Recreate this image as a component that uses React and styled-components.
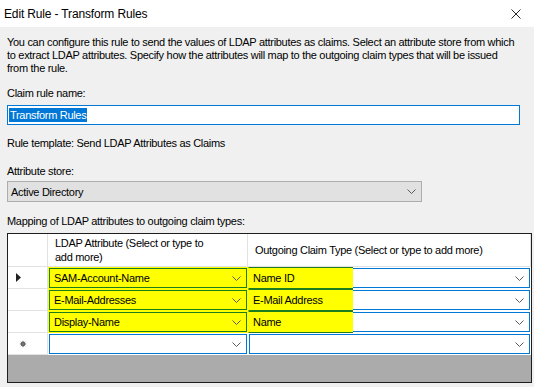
import React from 'react'
import styled, { createGlobalStyle } from 'styled-components'

const GlobalStyle = createGlobalStyle`
  html, body {
    margin: 0;
    padding: 0;
    background: #f0f0f0;
  }
  body {
    font-family: "Liberation Sans", Arial, sans-serif;
    font-size: 11px;
    letter-spacing: -0.3px;
    color: #000;
  }
`

const Window = styled.div`
  width: 534px;
  height: 387px;
  display: flex;
  flex-direction: column;
  background: #f0f0f0;
  overflow: hidden;
`

const TitleBar = styled.div`
  height: 27px;
  flex: none;
  background: #fff;
  display: flex;
  align-items: center;
  justify-content: space-between;
  padding: 0 13px 0 4px;
  font-size: 12px;
  letter-spacing: -0.15px;
`

const Body = styled.div`
  flex: 1;
  display: flex;
  flex-direction: column;
  padding: 9px 3px 0 7px;
`

const Description = styled.p`
  margin: 0;
  line-height: 13px;
  white-space: nowrap;
`

const Label = styled.div`
  line-height: 13px;
  margin-top: ${p => p.$top || 0}px;
`

const TextBox = styled.div`
  margin-top: 5px;
  width: 513px;
  height: 20px;
  box-sizing: border-box;
  border: 1px solid #0078d7;
  background: #fff;
  display: flex;
  align-items: center;
  padding-left: 1px;
`

const Selected = styled.span`
  background: #0078d7;
  color: #fff;
  line-height: 14px;
  padding: 0 1px;
`

const Select = styled.div`
  margin-top: 3px;
  width: 415px;
  height: 21px;
  box-sizing: border-box;
  border: 1px solid #adadad;
  background: #e1e1e1;
  display: flex;
  align-items: center;
  justify-content: space-between;
  padding: 0 5px 0 3px;
`

const Grid = styled.div`
  margin-top: 5px;
  width: 525px;
  height: 150px;
  box-sizing: border-box;
  border: 1px solid #1e1e1e;
  background: #ababab;
  display: grid;
  grid-template-columns: 40px 200px 1fr;
  grid-template-rows: 33px repeat(4, 22px) 1fr;
`

const HeaderCell = styled.div`
  background: #fff;
  border-right: 1px solid #e2e2e2;
  border-bottom: 1px solid #e2e2e2;
  display: flex;
  align-items: center;
  padding-left: ${p => p.$pad || 0}px;
  line-height: 14px;
`

const RowHead = styled.div`
  background: #fff;
  border-right: 1px solid #e2e2e2;
  border-bottom: 1px solid #e2e2e2;
  display: flex;
  align-items: center;
  padding-left: 8px;
`

const Cell = styled.div`
  display: flex;
  padding: 1px;
  background: ${p => (p.$mark ? '#ffff00' : '#fff')};
`

const Combo = styled.div`
  flex: 1;
  display: flex;
  align-items: stretch;
  border: 1px solid ${p => (p.$mark ? '#1d7d1d' : '#0078d7')};
  background: ${p => (p.$mark ? '#ffff00' : '#fff')};
`

const Value = styled.span`
  flex: ${p => (p.$mark ? 'none' : 1)};
  width: ${p => (p.$mark ? '100px' : 'auto')};
  display: flex;
  align-items: center;
  padding-left: 4px;
  background: ${p => (p.$mark ? '#ffff00' : 'transparent')};
  ${p => p.$mark && `
    margin: -2px 0 -2px -2px;
    border-bottom: 1px solid #1d7d1d;
    border-top: 1px solid #1d7d1d;
    border-left: 1px solid #ffff00;
  `}
`

const Arrow = styled.span`
  margin-left: auto;
  width: 16px;
  display: flex;
  align-items: center;
  justify-content: center;
  padding-right: 2px;
`

const Filler = styled.div`
  grid-column: 1 / -1;
`

const Chevron = () => (
  <svg width="9" height="5" viewBox="0 0 9 5">
    <polyline points="0.5,0.5 4.5,4.5 8.5,0.5" fill="none" stroke="#5a5a5a" strokeWidth="1" />
  </svg>
)

const Close = () => (
  <svg width="10" height="10" viewBox="0 0 10 10">
    <path d="M0.5 0.5 L9.5 9.5 M9.5 0.5 L0.5 9.5" stroke="#111" strokeWidth="0.9" />
  </svg>
)

const Pointer = () => (
  <svg width="6" height="9" viewBox="0 0 6 9">
    <polygon points="0,0 5,4.5 0,9" fill="#222" />
  </svg>
)

const NewRow = () => (
  <svg width="8" height="8" viewBox="0 0 8 8" style={{ marginLeft: 3 }}>
    <circle cx="4" cy="4" r="2.4" fill="#555" />
    <path d="M4 0.8 V7.2 M0.8 4 H7.2 M1.8 1.8 L6.2 6.2 M6.2 1.8 L1.8 6.2" stroke="#777" strokeWidth="0.8" />
  </svg>
)

const rows = [
  { attr: 'SAM-Account-Name', claim: 'Name ID', current: true },
  { attr: 'E-Mail-Addresses', claim: 'E-Mail Address' },
  { attr: 'Display-Name', claim: 'Name' },
]

const App = () => (
  <Window>
    <GlobalStyle />
    <TitleBar>
      <span>Edit Rule - Transform Rules</span>
      <Close />
    </TitleBar>
    <Body>
      <Description>
        You can configure this rule to send the values of LDAP attributes as claims. Select an attribute store from which
        <br />
        to extract LDAP attributes. Specify how the attributes will map to the outgoing claim types that will be issued
        <br />
        from the rule.
      </Description>
      <Label $top={12}>Claim rule name:</Label>
      <TextBox>
        <Selected>Transform Rules</Selected>
      </TextBox>
      <Label $top={12}>Rule template: Send LDAP Attributes as Claims</Label>
      <Label $top={15}>Attribute store:</Label>
      <Select>
        <span>Active Directory</span>
        <Chevron />
      </Select>
      <Label $top={13}>Mapping of LDAP attributes to outgoing claim types:</Label>
      <Grid>
        <HeaderCell />
        <HeaderCell $pad={7}>LDAP Attribute (Select or type to<br />add more)</HeaderCell>
        <HeaderCell $pad={7}>Outgoing Claim Type (Select or type to add more)</HeaderCell>
        {rows.map(r => (
          <React.Fragment key={r.attr}>
            <RowHead>{r.current && <Pointer />}</RowHead>
            <Cell $mark>
              <Combo $mark>
                <Value>{r.attr}</Value>
                <Arrow><Chevron /></Arrow>
              </Combo>
            </Cell>
            <Cell>
              <Combo>
                <Value $mark>{r.claim}</Value>
                <Arrow><Chevron /></Arrow>
              </Combo>
            </Cell>
          </React.Fragment>
        ))}
        <RowHead><NewRow /></RowHead>
        <Cell>
          <Combo>
            <Value />
            <Arrow><Chevron /></Arrow>
          </Combo>
        </Cell>
        <Cell>
          <Combo>
            <Value />
            <Arrow><Chevron /></Arrow>
          </Combo>
        </Cell>
        <Filler />
      </Grid>
    </Body>
  </Window>
)

export default App
